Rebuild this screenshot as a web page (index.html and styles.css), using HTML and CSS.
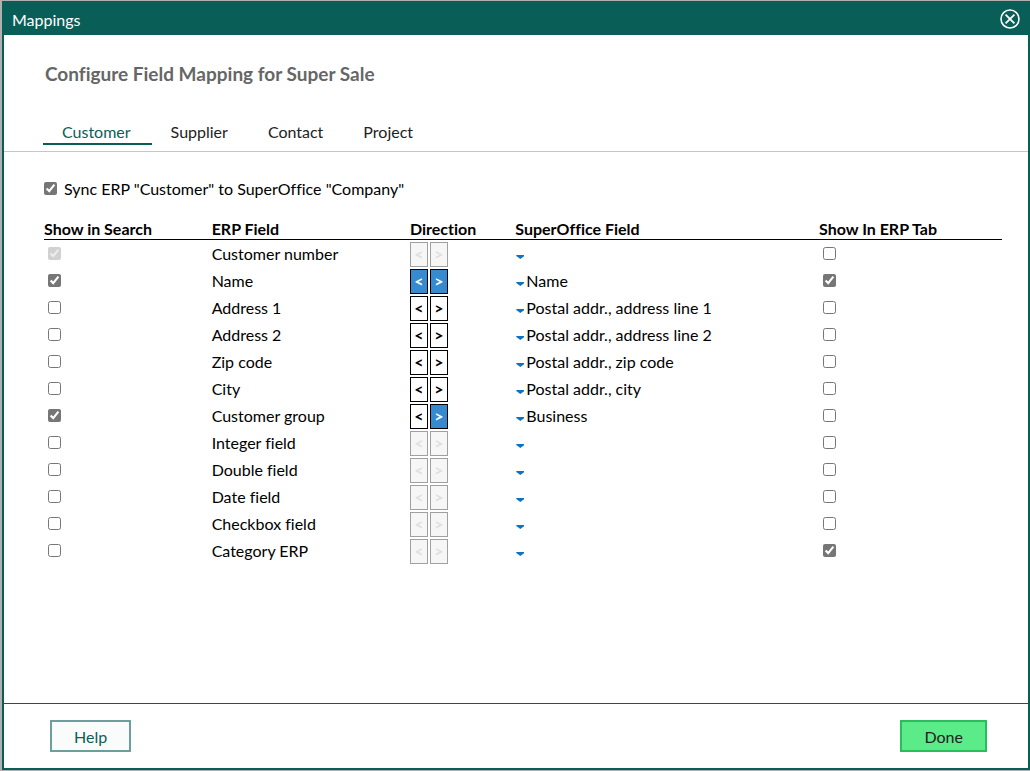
FILE: index.html
```html
<!DOCTYPE html>
<html lang="en">
<head>
<meta charset="utf-8">
<title>Mappings</title>
<link rel="stylesheet" href="styles.css">
</head>
<body>
<div class="dialog" role="dialog" aria-labelledby="dialog-title">
  <header class="titlebar">
    <span id="dialog-title">Mappings</span>
    <button class="close" type="button" aria-label="Close">
      <svg width="20" height="20" viewBox="0 0 20 20" fill="none" stroke="#fff" aria-hidden="true">
        <circle cx="10" cy="10" r="9" stroke-width="1.6"/>
        <path d="M5.6 5.6L14.4 14.4M14.4 5.6L5.6 14.4" stroke-width="1.8"/>
      </svg>
    </button>
  </header>
  <h1 class="heading">Configure Field Mapping for Super Sale</h1>
  <nav class="tabs">
    <a class="tab active" href="#customer">Customer</a>
    <a class="tab" href="#supplier">Supplier</a>
    <a class="tab" href="#contact">Contact</a>
    <a class="tab" href="#project">Project</a>
  </nav>
  <main class="content">
    <label class="sync"><input class="check" type="checkbox" checked><span>Sync ERP "Customer" to SuperOffice "Company"</span></label>
    <table class="fields">
      <thead>
        <tr><th class="col-search">Show in Search</th><th class="col-erp">ERP Field</th><th class="col-dir">Direction</th><th class="col-so">SuperOffice Field</th><th class="col-tab">Show In ERP Tab</th></tr>
      </thead>
      <tbody>
        <tr>
          <td><input class="check" type="checkbox" aria-label="Show Customer number in search" checked disabled></td>
          <td>Customer number</td>
          <td><div class="dirs"><button class="dir" type="button" disabled>&lt;</button><button class="dir" type="button" disabled>&gt;</button></div></td>
          <td><div class="picker"><select class="select" aria-label="SuperOffice field for Customer number"><option></option></select></div></td>
          <td><input class="check" type="checkbox" aria-label="Show Customer number in ERP tab"></td>
        </tr>
        <tr>
          <td><input class="check" type="checkbox" aria-label="Show Name in search" checked></td>
          <td>Name</td>
          <td><div class="dirs"><button class="dir on" type="button">&lt;</button><button class="dir on" type="button">&gt;</button></div></td>
          <td><div class="picker"><select class="select" aria-label="SuperOffice field for Name"><option>Name</option></select></div></td>
          <td><input class="check" type="checkbox" aria-label="Show Name in ERP tab" checked></td>
        </tr>
        <tr>
          <td><input class="check" type="checkbox" aria-label="Show Address 1 in search"></td>
          <td>Address 1</td>
          <td><div class="dirs"><button class="dir" type="button">&lt;</button><button class="dir" type="button">&gt;</button></div></td>
          <td><div class="picker"><select class="select" aria-label="SuperOffice field for Address 1"><option>Postal addr., address line 1</option></select></div></td>
          <td><input class="check" type="checkbox" aria-label="Show Address 1 in ERP tab"></td>
        </tr>
        <tr>
          <td><input class="check" type="checkbox" aria-label="Show Address 2 in search"></td>
          <td>Address 2</td>
          <td><div class="dirs"><button class="dir" type="button">&lt;</button><button class="dir" type="button">&gt;</button></div></td>
          <td><div class="picker"><select class="select" aria-label="SuperOffice field for Address 2"><option>Postal addr., address line 2</option></select></div></td>
          <td><input class="check" type="checkbox" aria-label="Show Address 2 in ERP tab"></td>
        </tr>
        <tr>
          <td><input class="check" type="checkbox" aria-label="Show Zip code in search"></td>
          <td>Zip code</td>
          <td><div class="dirs"><button class="dir" type="button">&lt;</button><button class="dir" type="button">&gt;</button></div></td>
          <td><div class="picker"><select class="select" aria-label="SuperOffice field for Zip code"><option>Postal addr., zip code</option></select></div></td>
          <td><input class="check" type="checkbox" aria-label="Show Zip code in ERP tab"></td>
        </tr>
        <tr>
          <td><input class="check" type="checkbox" aria-label="Show City in search"></td>
          <td>City</td>
          <td><div class="dirs"><button class="dir" type="button">&lt;</button><button class="dir" type="button">&gt;</button></div></td>
          <td><div class="picker"><select class="select" aria-label="SuperOffice field for City"><option>Postal addr., city</option></select></div></td>
          <td><input class="check" type="checkbox" aria-label="Show City in ERP tab"></td>
        </tr>
        <tr>
          <td><input class="check" type="checkbox" aria-label="Show Customer group in search" checked></td>
          <td>Customer group</td>
          <td><div class="dirs"><button class="dir" type="button">&lt;</button><button class="dir on" type="button">&gt;</button></div></td>
          <td><div class="picker"><select class="select" aria-label="SuperOffice field for Customer group"><option>Business</option></select></div></td>
          <td><input class="check" type="checkbox" aria-label="Show Customer group in ERP tab"></td>
        </tr>
        <tr>
          <td><input class="check" type="checkbox" aria-label="Show Integer field in search"></td>
          <td>Integer field</td>
          <td><div class="dirs"><button class="dir" type="button" disabled>&lt;</button><button class="dir" type="button" disabled>&gt;</button></div></td>
          <td><div class="picker"><select class="select" aria-label="SuperOffice field for Integer field"><option></option></select></div></td>
          <td><input class="check" type="checkbox" aria-label="Show Integer field in ERP tab"></td>
        </tr>
        <tr>
          <td><input class="check" type="checkbox" aria-label="Show Double field in search"></td>
          <td>Double field</td>
          <td><div class="dirs"><button class="dir" type="button" disabled>&lt;</button><button class="dir" type="button" disabled>&gt;</button></div></td>
          <td><div class="picker"><select class="select" aria-label="SuperOffice field for Double field"><option></option></select></div></td>
          <td><input class="check" type="checkbox" aria-label="Show Double field in ERP tab"></td>
        </tr>
        <tr>
          <td><input class="check" type="checkbox" aria-label="Show Date field in search"></td>
          <td>Date field</td>
          <td><div class="dirs"><button class="dir" type="button" disabled>&lt;</button><button class="dir" type="button" disabled>&gt;</button></div></td>
          <td><div class="picker"><select class="select" aria-label="SuperOffice field for Date field"><option></option></select></div></td>
          <td><input class="check" type="checkbox" aria-label="Show Date field in ERP tab"></td>
        </tr>
        <tr>
          <td><input class="check" type="checkbox" aria-label="Show Checkbox field in search"></td>
          <td>Checkbox field</td>
          <td><div class="dirs"><button class="dir" type="button" disabled>&lt;</button><button class="dir" type="button" disabled>&gt;</button></div></td>
          <td><div class="picker"><select class="select" aria-label="SuperOffice field for Checkbox field"><option></option></select></div></td>
          <td><input class="check" type="checkbox" aria-label="Show Checkbox field in ERP tab"></td>
        </tr>
        <tr>
          <td><input class="check" type="checkbox" aria-label="Show Category ERP in search"></td>
          <td>Category ERP</td>
          <td><div class="dirs"><button class="dir" type="button" disabled>&lt;</button><button class="dir" type="button" disabled>&gt;</button></div></td>
          <td><div class="picker"><select class="select" aria-label="SuperOffice field for Category ERP"><option></option></select></div></td>
          <td><input class="check" type="checkbox" aria-label="Show Category ERP in ERP tab" checked></td>
        </tr>
      </tbody>
    </table>
  </main>
  <footer class="footer">
    <button class="btn help" type="button">Help</button>
    <button class="btn done" type="button">Done</button>
  </footer>
</div>
</body>
</html>
```
FILE: styles.css
```css
* { box-sizing: border-box; }

body {
  margin: 0;
  min-height: 100vh;
  padding: 1px 0 1px 2px;
  display: flex;
  background: #b0b0b0;
  color: #000;
  font: 16px/20px Lato, sans-serif;
  font-variant-ligatures: none;
}

button, select { font: inherit; }

.dialog {
  flex: 1;
  display: flex;
  flex-direction: column;
  background: #fff;
  border: 2px solid #0a5e58;
  border-top: 0;
}

.titlebar {
  display: flex;
  align-items: center;
  justify-content: space-between;
  height: 34px;
  padding: 4px 8px 0;
  background: #0a5e58;
  color: #fff;
}

.close {
  display: flex;
  padding: 0 0 2px;
  border: 0;
  background: none;
}

.heading {
  margin: 0;
  padding: 27px 41px 0;
  color: #666;
  font-size: 19px;
  line-height: 24px;
}

.tabs {
  display: flex;
  padding: 34px 39px 6px;
  border-bottom: 1px solid #c6c6c6;
}

.tab {
  padding: 2px 21px 1px 19px;
  border-bottom: 2px solid transparent;
  color: #222;
  text-decoration: none;
}

.tab.active {
  border-color: #0a5e58;
  color: #0a5e58;
}

.content {
  flex: 1;
  padding: 27px 26px 27px 40px;
}

.sync {
  display: flex;
  align-items: center;
  gap: 7px;
}

.check {
  display: block;
  flex: none;
  width: 13px;
  height: 13px;
  margin: 0;
  accent-color: #767676;
}

.sync .check { margin-bottom: 2px; }

.fields {
  width: 100%;
  margin-top: 20px;
  border-collapse: separate;
  border-spacing: 0;
  table-layout: fixed;
}

.fields th {
  padding: 0;
  border-bottom: 1px solid #000;
  text-align: left;
  white-space: nowrap;
}

.fields td {
  height: 27px;
  padding: 2px 0 0;
  vertical-align: middle;
}

.fields td:nth-child(2) { padding: 0; }

.fields td .check { margin: 0 4px 2px; }

.col-search { width: 17.5%; }
.col-erp { width: 20.7%; }
.col-dir { width: 11%; }
.col-so { width: 31.7%; }

.dirs {
  display: flex;
  gap: 2px;
}

.dir {
  width: 18px;
  height: 25px;
  padding: 0 0 2px;
  border: 1px solid #000;
  background: #fff;
  color: #000;
  font-size: 16px;
  font-weight: bold;
}

.dir.on {
  background: #368bd0;
  color: #fff;
}

.dir:disabled {
  border-color: #a0a0a0;
  background: #f6f6f6;
  color: #e0e0e0;
}

.picker {
  display: flex;
  align-items: center;
}

.picker::before {
  content: "";
  flex: none;
  width: 8px;
  height: 4px;
  margin: 5px 2px 0 1px;
  background: #0b73bf;
  clip-path: polygon(0 0, 100% 0, 100% 25%, 50% 100%, 0 25%);
}

.select {
  appearance: none;
  flex: 1;
  min-width: 0;
  padding: 0 0 2px;
  border: 0;
  background: none;
  color: #000;
}

.footer {
  display: flex;
  justify-content: space-between;
  padding: 16px 41px 16px 46px;
  border-top: 1px solid #0a5e58;
}

.btn {
  height: 32px;
  padding: 2px 22px 0;
  border: 2px solid;
}

.help {
  border-color: #6c9e9b;
  background: #fafcfc;
  color: #0a5e58;
}

.done {
  border-color: #2bbd5d;
  background: #5beb88;
  color: #222;
}
```
